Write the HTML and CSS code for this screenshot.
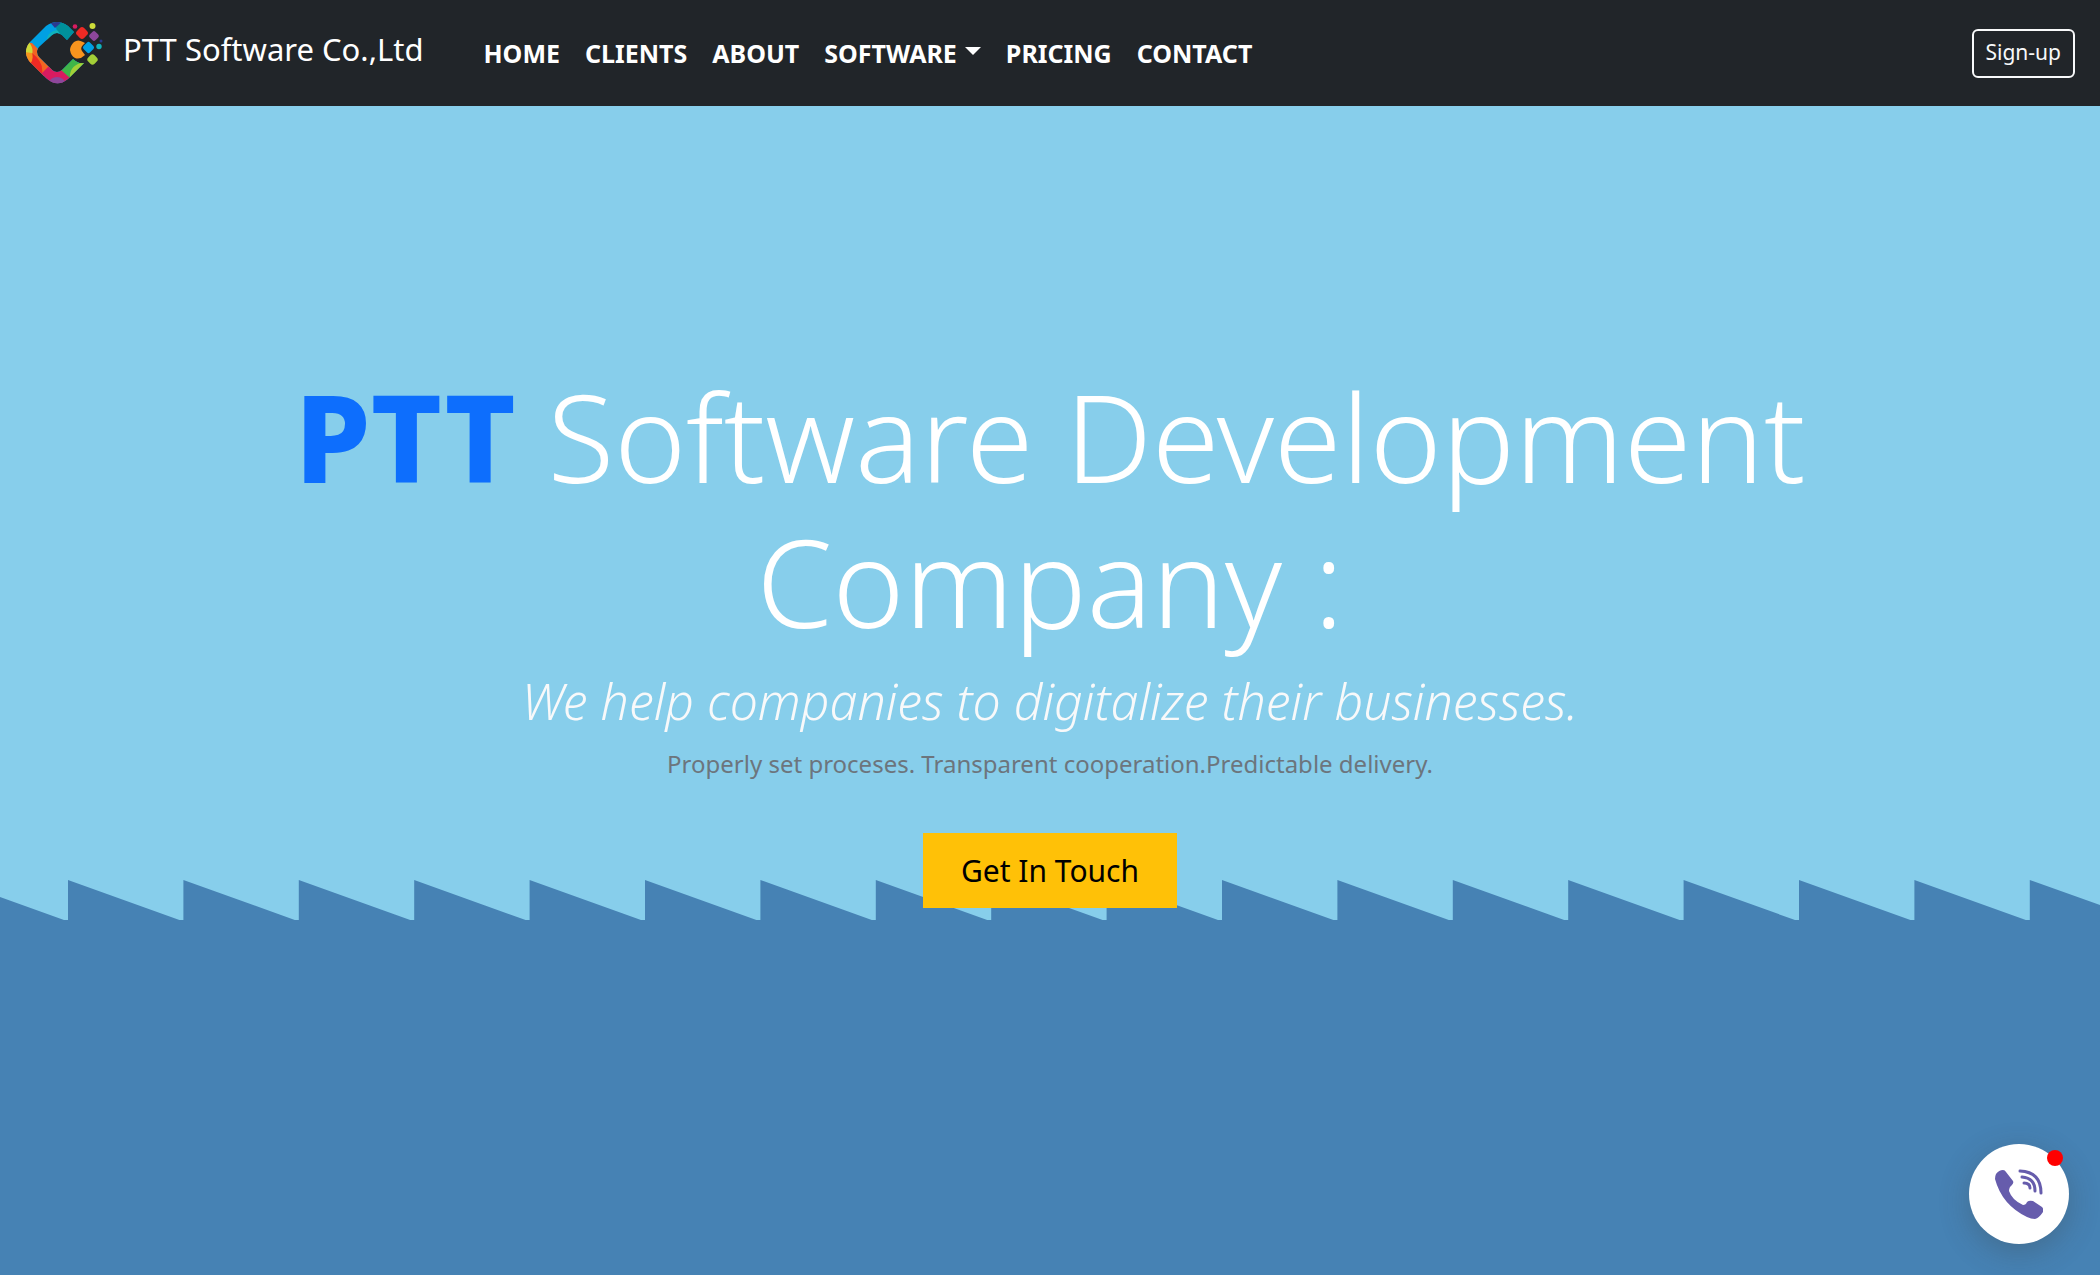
FILE: index.html
```html
<!DOCTYPE html>
<html lang="en">
<head>
<meta charset="utf-8">
<meta name="viewport" content="width=device-width, initial-scale=1">
<title>PTT Software Co.,Ltd</title>
<link rel="stylesheet" href="styles.css">
</head>
<body>
<header class="navbar">
  <a class="brand" href="#">
    <svg class="brand-logo" viewBox="0 0 76 62" aria-hidden="true">
      <defs>
        <clipPath id="ring"><path d="M48 10 L42 4 Q31 -4 20 4 L4 20 Q-4 30 4 40 L20 56 Q31 66 42 57 L58 41 Q52 42 47 37 L36 48 Q31 52 26 48 L13 35 Q9 30 13 25 L26 13 Q31 9 36 13 L41 18 Z"/></clipPath>
      </defs>
      <g clip-path="url(#ring)">
        <path fill="#00a0e3" d="M-2 -2H64V64H-2z"/>
        <path fill="#00919b" d="M28 -2H54V20H34z"/>
        <path fill="#10b4bc" d="M20 20Q22 9 31 8L36 14L24 24z"/>
        <path fill="#2a3990" d="M22 -2H38L29 6z"/>
        <path fill="#f26522" d="M-2 20L6 21L30 45L16 56L-2 44z"/>
        <path fill="#ee2a24" d="M-2 40L6 31Q18 40 16 52L12 56z"/>
        <path fill="#cddc39" d="M-2 20H3Q8 27 6 32L-2 32z"/>
        <path fill="#f7941e" d="M-2 30L6 31Q8 37 4 42L-2 42z"/>
        <path fill="#d91b60" d="M14 53L24 43L36 47L46 57L38 64H14z"/>
        <ellipse fill="#8d479b" cx="31" cy="61" rx="8" ry="6"/>
        <path fill="#3fb549" d="M35 48L47 35L60 42L44 56z"/>
        <path fill="#a3cf37" d="M44 56Q43 42 60 40V48z"/>
      </g>
      <path fill="#f7941e" d="M57 20Q52 17 48 20Q44 24 44 28Q45 34 49 36Q54 38 59 33L56 29Q54 26 57 23L59 21z"/>
      <g>
        <rect fill="#00a0e3" x="58" y="21" width="9" height="9" rx="2" transform="rotate(45 62.500 25.500)"/>
        <rect fill="#ee2a24" x="51" y="6" width="10" height="10" rx="3" transform="rotate(45 56 11)"/>
        <rect fill="#8d479b" x="64" y="10" width="8" height="8" rx="2" transform="rotate(45 68 14)"/>
        <rect fill="#a3cf37" x="62" y="33" width="9" height="9" rx="3" transform="rotate(45 66.500 37.500)"/>
        <circle fill="#cddc39" cx="66.500" cy="4" r="3"/>
        <circle fill="#d91b60" cx="49" cy="4.500" r="2.300"/>
        <circle fill="#10b4bc" cx="73" cy="24.500" r="2.700"/>
        <circle fill="#2a3990" cx="75" cy="19" r="1.500"/>
      </g>
    </svg>
    <span>PTT Software Co.,Ltd</span>
  </a>
  <nav class="menu" aria-label="Main">
    <a href="#">HOME</a>
    <a href="#">CLIENTS</a>
    <a href="#">ABOUT</a>
    <a class="dropdown" href="#">SOFTWARE</a>
    <a href="#">PRICING</a>
    <a href="#">CONTACT</a>
  </nav>
  <button class="signup" type="button">Sign-up</button>
</header>
<main class="hero">
  <div class="sea" aria-hidden="true">
    <svg class="waves" viewBox="0 0 2100 41" preserveAspectRatio="none"><path fill="#4682b4" d="M0 17L64 40H68V0l111.400 40h4V0l111.400 40h4V0l111.400 40h4V0l111.400 40h4V0l111.400 40h4V0l111.400 40h4V0l111.400 40h4V0l111.400 40h4V0l111.400 40h4V0l111.400 40h4V0l111.400 40h4V0l111.400 40h4V0l111.400 40h4V0l111.400 40h4V0l111.400 40h4V0l111.400 40h4V0l111.400 40h4V0L2100 25V41H0z"/></svg>
    <div class="water"></div>
  </div>
  <div class="intro">
    <h1><strong>PTT</strong> Software Development Company :</h1>
    <p class="tagline">We help companies to digitalize their businesses.</p>
    <p class="note">Properly set proceses. Transparent cooperation.Predictable delivery.</p>
    <button class="cta" type="button">Get In Touch</button>
  </div>
</main>
<button class="call" type="button" aria-label="Call us">
  <svg viewBox="0 0 48 50" aria-hidden="true">
    <path fill="#665cac" d="M1 5Q4 1 8 1Q10 1 11 3L18 12Q19 14 17 16Q14 18 14 22Q17 31 28 36Q31 36 32 33Q34 31 38 32L47 38Q49 40 48 43Q44 49 40 50Q36 50 32 48Q7 36 0 10Q0 7 1 5z"/>
    <g fill="none" stroke="#665cac" stroke-width="3" stroke-linecap="round"><path d="M25 2Q46 3 46 24"/><path d="M27 8Q40 9 40 22"/><path d="M29 14Q35 14 35 19"/></g>
  </svg>
  <span class="badge"></span>
</button>
</body>
</html>
```
FILE: styles.css
```css
* { box-sizing: border-box; }

body {
  margin: 0;
  min-height: 100vh;
  display: flex;
  flex-direction: column;
  font-family: "Noto Sans", "Open Sans", sans-serif;
  font-size: 24px;
  color: #fff;
  background: #87ceeb;
}

button { font-family: inherit; cursor: pointer; }
a { color: inherit; text-decoration: none; }

.navbar {
  display: flex;
  align-items: center;
  min-height: 106px;
  padding: 0 25px;
  background: #212529;
}

.brand {
  display: flex;
  align-items: center;
  gap: 20px;
  margin-right: 60px;
  font-size: 31px;
  line-height: 40px;
}
.brand span { padding-bottom: 8px; }
.brand-logo { width: 78px; height: 62px; }

.menu {
  display: flex;
  gap: 25px;
  font-size: 25px;
  font-weight: 700;
  line-height: 32px;
}

.dropdown { display: flex; align-items: center; gap: 8px; }
.dropdown::after {
  content: "";
  margin-bottom: 4px;
  border: 8px solid transparent;
  border-top-color: currentColor;
  border-bottom: 0;
}

.signup {
  margin-left: auto;
  height: 49px;
  padding: 0 12px 2px;
  border: 2px solid #f8f9fa;
  border-radius: 6px;
  background: transparent;
  color: #f8f9fa;
  font-size: 21px;
}

.hero {
  flex: 1;
  display: grid;
  grid-template-columns: 1fr;
  grid-template-rows: 774fr 395fr;
}

.sea {
  grid-area: 2 / 1;
  display: flex;
  flex-direction: column;
}
.waves { display: block; width: 100%; height: 41px; }
.water { flex: 1; background: #4682b4; }

.intro {
  grid-area: 1 / 1 / 3 / 2;
  width: 100%;
  max-width: 1650px;
  margin: 0 auto;
  padding: 258px 16px 0;
  text-align: center;
}

h1 {
  margin: 0;
  font-size: 122px;
  font-weight: 300;
  line-height: 145px;
}
h1 strong { color: #0d6efd; font-weight: 800; }

.tagline {
  margin: 16px 0 13px;
  color: #f8f9fa;
  font-size: 50px;
  font-style: italic;
  font-weight: 300;
  line-height: 62px;
}

.note {
  margin: 0 0 50px;
  color: #6c757d;
  line-height: 38px;
}

.cta {
  height: 75px;
  padding: 0 38px;
  border: 0;
  background: #ffc107;
  color: #000;
  font-size: 30px;
}

.call {
  position: fixed;
  right: 31px;
  bottom: 31px;
  width: 100px;
  height: 100px;
  padding: 0;
  border: 0;
  border-radius: 50%;
  background: #fff;
  box-shadow: 0 8px 30px rgba(60, 60, 60, 0.3);
}
.call svg { display: block; width: 48px; height: 50px; margin: 0 auto; }

.badge {
  position: absolute;
  top: 6px;
  right: 6px;
  width: 16px;
  height: 16px;
  border-radius: 50%;
  background: #f00;
}
```
